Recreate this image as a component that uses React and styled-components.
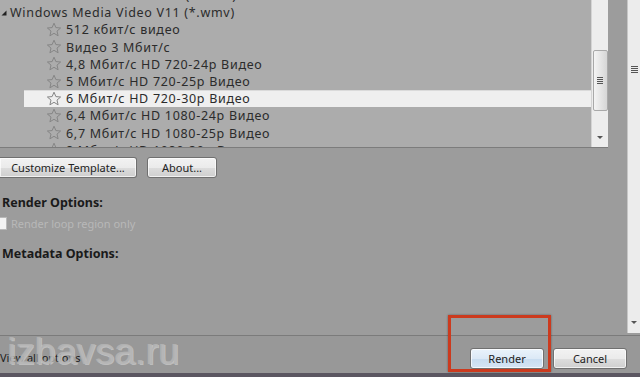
import React from "react";
import styled, { createGlobalStyle } from "styled-components";

const GlobalStyle = createGlobalStyle`
  html, body {
    margin: 0;
    padding: 0;
    overflow: hidden;
    background: #9c9c9c;
  }
`;

const Window = styled.div`
  width: 640px;
  height: 377px;
  display: flex;
  flex-direction: column;
  font-family: "Noto Sans", "Open Sans", sans-serif;
  font-size: 11px;
  color: #222;
  background: #9c9c9c;
  overflow: hidden;
  position: relative;
`;

const Main = styled.div`
  height: 335px;
  display: flex;
`;

const LeftColumn = styled.div`
  width: 628px;
  display: flex;
  flex-direction: column;
`;

const ListArea = styled.div`
  height: 147px;
  display: flex;
  border-bottom: 1px solid #7c7c7c;
  width: 608px;
`;

const TreeList = styled.div`
  width: 592px;
  background: #acacac;
  overflow: hidden;
`;

const TreeInner = styled.div`
  margin-top: -13px;
  font-size: 12.5px;
  letter-spacing: 0.7px;
`;

const Row = styled.div`
  height: 17.2px;
  display: flex;
  align-items: center;
  padding-left: ${({ indent }) => indent}px;
  margin-left: ${({ selected }) => (selected ? "24px" : "0")};
  background: ${({ selected }) => (selected ? "#efefef" : "transparent")};
  box-shadow: ${({ selected }) => (selected ? "inset 0 1px 0 #dadada" : "none")};
  white-space: nowrap;
  color: #2b2b2b;
`;

const Expander = styled.span`
  width: 10px;
  display: inline-flex;
  justify-content: flex-start;
  padding-left: 1px;
  box-sizing: border-box;
`;

const StarWrap = styled.span`
  width: 16px;
  height: 16px;
  display: inline-flex;
  margin-right: 4px;
`;

const VScroll = styled.div`
  width: 16px;
  background: #ededed;
  border-left: 1px solid #d4d4d4;
  position: relative;
  display: flex;
  flex-direction: column;
  align-items: center;
`;

const Thumb = styled.div`
  margin-top: ${({ top }) => top}px;
  width: ${({ w }) => w}px;
  height: ${({ h }) => h}px;
  border: 1px solid #a9a9a9;
  border-radius: 2px;
  background: linear-gradient(to right, #f4f4f4, #e2e2e2 60%, #d6d6d6);
  display: flex;
  align-items: center;
  justify-content: center;
  box-sizing: border-box;
`;

const Grip = styled.div`
  width: 6px;
  height: 8px;
  background: repeating-linear-gradient(
    to bottom,
    #555 0,
    #555 1px,
    transparent 1px,
    transparent 2px
  );
`;

const Arrow = styled.div`
  position: absolute;
  bottom: ${({ bottom }) => bottom}px;
  left: 50%;
  margin-left: -3px;
  width: 0;
  height: 0;
  border-left: 3px solid transparent;
  border-right: 3px solid transparent;
  border-top: 3px solid #555;
`;

const Options = styled.div`
  flex: 1;
  display: flex;
  flex-direction: column;
`;

const ButtonRow = styled.div`
  display: flex;
  gap: 10px;
  margin-top: 9px;
`;

const Button = styled.button`
  height: 21px;
  width: ${({ w }) => w}px;
  padding: 0;
  font-family: inherit;
  font-size: 11px;
  color: #222;
  border: 1px solid #707070;
  border-radius: 3px;
  background: ${({ primary }) =>
    primary
      ? "linear-gradient(to bottom, #eaf3fb 0%, #dce9f6 50%, #c8dcf0 51%, #d6e5f4 100%)"
      : "linear-gradient(to bottom, #f2f2f2 0%, #ebebeb 50%, #dddddd 51%, #cfcfcf 100%)"};
  box-shadow: inset 0 0 0 1px rgba(255, 255, 255, 0.7);
`;

const FirstButton = styled(Button)`
  border-left: none;
  border-radius: 0 3px 3px 0;
`;

const SectionTitle = styled.div`
  font-weight: bold;
  font-size: 12.5px;
  color: #1a1a1a;
  margin-left: 2px;
  margin-top: ${({ mt }) => mt}px;
  line-height: 16px;
`;

const CheckRow = styled.div`
  display: flex;
  align-items: center;
  margin-top: 5px;
  height: 14px;
`;

const Check = styled.span`
  width: 6px;
  height: 11px;
  background: #f3f3f3;
  border: 1px solid #b9b9b9;
  border-left: none;
  margin-right: 4px;
`;

const Disabled = styled.span`
  color: #b8b8b8;
`;

const OuterScroll = styled.div`
  width: 12px;
  background: #ececec;
  border-left: 1px solid #c6c6c6;
  position: relative;
  display: flex;
  flex-direction: column;
  align-items: flex-start;
  height: 333px;
`;

const OuterGrip = styled.div`
  margin-top: 66px;
  margin-left: 3px;
  width: 7px;
  height: 8px;
  background: repeating-linear-gradient(
    to bottom,
    #555 0,
    #555 1px,
    transparent 1px,
    transparent 2px
  );
`;

const Footer = styled.div`
  height: 37px;
  background: #989898;
  border-top: 1px solid #7b7b7b;
  display: flex;
  align-items: center;
  position: relative;
`;

const ViewAll = styled.span`
  color: #1c1c1c;
  margin-top: 5px;
  flex: 1;
`;

const FooterButtons = styled.div`
  display: flex;
  gap: 9px;
  margin-right: 13px;
  margin-top: 7px;
`;

const Watermark = styled.div`
  position: absolute;
  left: 8px;
  top: -5px;
  font-family: "Liberation Sans", Arial, sans-serif;
  font-size: 37px;
  color: rgba(178, 178, 178, 0.75);
  text-shadow: 1px 1px 0 rgba(215, 215, 215, 0.6), -1px 0 0 rgba(200, 200, 200, 0.5);
  pointer-events: none;
  letter-spacing: 0.3px;
`;

const Highlight = styled.div`
  position: absolute;
  left: 448px;
  top: 315px;
  width: 103px;
  height: 57px;
  border: 3px solid #cc3a1e;
  box-sizing: border-box;
  box-shadow: 0 0 2px rgba(0, 0, 0, 0.4);
  pointer-events: none;
`;

const BottomStrip = styled.div`
  height: 4px;
  background: #5b5661;
`;

const Star = () => (
  <svg width="16" height="16" viewBox="0 0 16 16">
    <path
      d="M8 1.2 L9.9 5.6 L14.6 6 L11 9.1 L12.1 13.8 L8 11.3 L3.9 13.8 L5 9.1 L1.4 6 L6.1 5.6 Z"
      fill="none"
      stroke="#858585"
      strokeWidth="1"
      strokeLinejoin="round"
    />
  </svg>
);

const DownTriangle = () => (
  <svg width="6" height="6" viewBox="0 0 6 6">
    <path d="M5.5 0.5 L5.5 5.5 L0.5 5.5 Z" fill="#222" />
  </svg>
);

const presets = [
  "512 кбит/с видео",
  "Видео 3 Мбит/с",
  "4,8 Мбит/с HD 720-24p Видео",
  "5 Мбит/с HD 720-25p Видео",
  "6 Мбит/с HD 720-30p Видео",
  "6,4 Мбит/с HD 1080-24p Видео",
  "6,7 Мбит/с HD 1080-25p Видео",
  "8 Мбит/с HD 1080-30p Видео",
];

export default function App() {
  return (
    <>
      <GlobalStyle />
      <Window>
        <Main>
          <LeftColumn>
            <ListArea>
              <TreeList>
                <TreeInner>
                  <Row indent={0}>
                    <Expander>
                      <DownTriangle />
                    </Expander>
                    Windows Media Audio V11 (*.wma)
                  </Row>
                  <Row indent={0}>
                    <Expander>
                      <DownTriangle />
                    </Expander>
                    Windows Media Video V11 (*.wmv)
                  </Row>
                  {presets.map((p, i) => (
                    <Row
                      key={p}
                      indent={i === 4 ? 22 : 46}
                      selected={i === 4}
                    >
                      <StarWrap>
                        <Star />
                      </StarWrap>
                      {p}
                    </Row>
                  ))}
                </TreeInner>
              </TreeList>
              <VScroll>
                <Thumb top={50} w={15} h={61}>
                  <Grip />
                </Thumb>
                <Arrow bottom={8} />
              </VScroll>
            </ListArea>
            <Options>
              <ButtonRow>
                <FirstButton w={137}>Customize Template...</FirstButton>
                <Button w={70}>About...</Button>
              </ButtonRow>
              <SectionTitle mt={17}>Render Options:</SectionTitle>
              <CheckRow>
                <Check />
                <Disabled>Render loop region only</Disabled>
              </CheckRow>
              <SectionTitle mt={16}>Metadata Options:</SectionTitle>
            </Options>
          </LeftColumn>
          <OuterScroll>
            <OuterGrip />
            <Arrow bottom={9} />
          </OuterScroll>
        </Main>
        <Footer>
          <ViewAll>View all options</ViewAll>
          <FooterButtons>
            <Button primary w={74}>
              Render
            </Button>
            <Button w={74}>Cancel</Button>
          </FooterButtons>
          <Watermark>izbavsa.ru</Watermark>
        </Footer>
        <BottomStrip />
        <Highlight />
      </Window>
    </>
  );
}
